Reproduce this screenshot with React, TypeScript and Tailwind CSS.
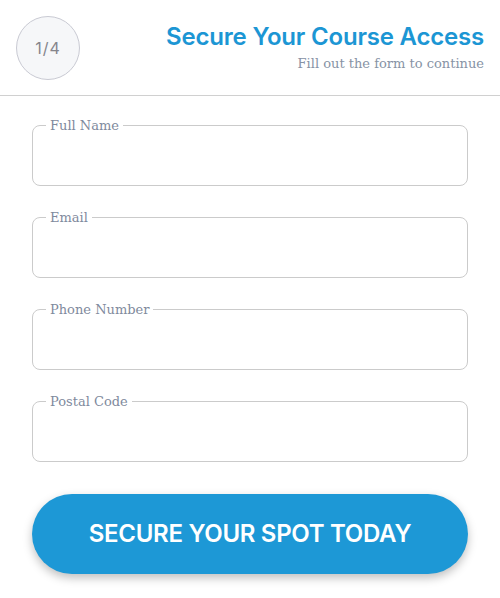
import React from "react";

const fields = ["Full Name", "Email", "Phone Number", "Postal Code"];

export default function App() {
  return (
    <div className="w-[500px] h-[598px] bg-white" style={{ fontFamily: "Inter, 'Liberation Sans', sans-serif" }}>
      <header className="h-24 border-b border-[#d0d0d0] flex items-center justify-between px-4">
        <div className="w-16 h-16 rounded-full border border-[#c9cad3] bg-[#f6f7f9] flex items-center justify-center text-[16px] tracking-[1px] text-[#85858c]">
          1/4
        </div>
        <div className="flex flex-col items-end pr-0">
          <h1 className="text-[24px] leading-[30px] font-semibold text-[#1c96d4] tracking-[-0.2px]">
            Secure Your Course Access
          </h1>
          <p className="text-[13px] leading-[18px] text-[#8793a5] mt-[3px]" style={{ fontFamily: "'DejaVu Serif', serif" }}>
            Fill out the form to continue
          </p>
        </div>
      </header>
      <form className="px-8 pt-[20px] flex flex-col gap-[22px]">
        {fields.map((f) => (
          <fieldset key={f} className="border border-[#cbcbcb] rounded-lg">
            <legend className="ml-[13px] px-1 pt-[2px] text-[13px] leading-[16px] text-[#7f8a9d]" style={{ fontFamily: "'DejaVu Serif', serif" }}>
              {f}
            </legend>
            <input className="w-full h-[51px] px-4 outline-none bg-transparent" aria-label={f} />
          </fieldset>
        ))}
        <button
          type="button"
          className="mt-[10px] h-20 w-full rounded-full bg-[#1d98d6] text-white text-[24px] font-semibold tracking-[-0.3px] shadow-[0_4px_10px_rgba(0,0,0,0.25)]"
        >
          SECURE YOUR SPOT TODAY
        </button>
      </form>
    </div>
  );
}
